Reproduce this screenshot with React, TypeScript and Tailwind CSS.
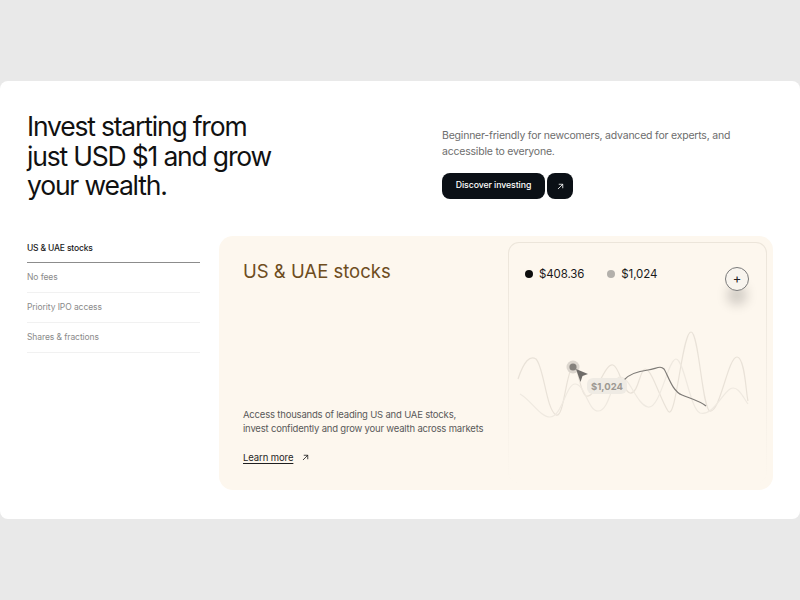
import React from 'react';

const tabs = ['US & UAE stocks', 'No fees', 'Priority IPO access', 'Shares & fractions'];

const ArrowUpRight = ({ className }: { className?: string }) => (
  <svg viewBox="0 0 12 12" className={className} fill="none" stroke="currentColor" strokeWidth="1.1" strokeLinecap="round" strokeLinejoin="round">
    <path d="M3 9 L9 3" />
    <path d="M4.2 3 H9 V7.8" />
  </svg>
);

const Chart = () => (
  <svg viewBox="509 322 257 110" width="257" height="110" className="block">
    {/* faint background waves */}
    <path
      d="M518,380 C524,362 530,356 536,360 C544,368 546,410 556,416 C564,420 566,372 573,367 C578,364 580,395 586,397 C596,400 604,364 613,366 C620,368 622,392 630,394 C638,396 640,370 645,370 C652,370 660,400 668,412 C676,424 682,333 691,333 C699,333 702,410 710,412 C720,414 728,358 737,358 C745,358 746,395 748,402"
      fill="none"
      stroke="#e9e2d8"
      strokeWidth="1.2"
    />
    <path
      d="M520,395 C530,400 540,418 550,418 C562,418 566,385 575,385 C585,385 588,412 598,412 C610,412 612,378 620,378 C630,378 636,405 648,408 C660,411 668,360 676,360 C684,360 690,410 700,414 C712,418 722,395 730,390 C738,385 744,400 748,405"
      fill="none"
      stroke="#efe9e0"
      strokeWidth="1.2"
    />
    {/* active segment */}
    <path
      d="M624,381 C630,374 640,372 648,371 C656,370 660,366 664,370 C668,376 672,392 682,396 C692,400 700,402 706,407"
      fill="none"
      stroke="#7d7a76"
      strokeWidth="1.2"
    />
    {/* point + cursor */}
    <circle cx="573" cy="368" r="6.5" fill="#dcd6ce" />
    <circle cx="573" cy="368" r="3.6" fill="#85817c" />
    <polygon points="576,370 588,375 582.5,377 580.5,383" fill="#6f6c69" />
    {/* tooltip */}
    <rect x="587" y="379" width="40" height="16" rx="6" fill="#efebe4" />
    <text x="607" y="391" textAnchor="middle" fontSize="9.5" fontWeight="700" fill="#9c9892" fontFamily="Inter, sans-serif">
      $1,024
    </text>
  </svg>
);

export default function App() {
  return (
    <div className="h-[600px] bg-[#e9e9e9] pt-[81px] font-['Inter',sans-serif]">
      <div className="h-[438px] rounded-lg bg-white px-[27px] pt-[31px]">
        {/* Top */}
        <div className="flex">
          <h1 className="w-[415px] text-[26.5px] leading-[29.5px] tracking-[-0.045em] text-[#111]">
            Invest starting from
            <br />
            just USD $1 and grow
            <br />
            your wealth.
          </h1>
          <div className="pt-[16px]">
            <p className="text-[10.5px] leading-4 tracking-[-0.02em] text-[#6d6d6d]">
              Beginner-friendly for newcomers, advanced for experts, and
              <br />
              accessible to everyone.
            </p>
            <div className="mt-[13px] flex gap-[2px]">
              <button className="flex h-[26px] w-[103px] items-center justify-center rounded-lg bg-[#0b1016] text-[8.75px] font-medium tracking-[-0.01em] text-white">
                Discover investing
              </button>
              <button className="flex h-[26px] w-[26px] items-center justify-center rounded-lg bg-[#0b1016] text-white">
                <ArrowUpRight className="h-[9px] w-[9px]" />
              </button>
            </div>
          </div>
        </div>

        {/* Bottom */}
        <div className="mt-[35px] flex gap-[19px]">
          <div className="w-[173px]">
            {tabs.map((t, i) =>
              i === 0 ? (
                <div key={t} className="border-b-[1.5px] border-[#8c8c8c] pt-[6px] pb-[7px] text-[8.5px] leading-[13px] font-medium tracking-[-0.02em] text-[#1a1a1a]">
                  {t}
                </div>
              ) : (
                <div key={t} className="border-b border-[#f1f1f1] pt-[8px] pb-[8px] text-[8.5px] leading-[13px] tracking-[-0.01em] text-[#8a8a8a]">
                  {t}
                </div>
              )
            )}
          </div>

          <div className="flex h-[254px] w-[554px] rounded-[14px] bg-[#fdf7ee]">
            <div className="flex flex-1 flex-col justify-between pt-[23px] pb-[25px] pl-6">
              <h2 className="text-[18.5px] leading-6 text-[#6e4d1e]">US &amp; UAE stocks</h2>
              <div>
                <p className="text-[9.5px] leading-[14px] tracking-[-0.02em] whitespace-nowrap text-[#595959]">
                  Access thousands of leading US and UAE stocks,
                  <br />
                  invest confidently and grow your wealth across markets
                </p>
                <div className="mt-[15px] flex items-center gap-[8px] text-[9.5px] leading-[14px] tracking-[-0.01em] text-[#1f1f1f]">
                  <span className="underline underline-offset-2">Learn more</span>
                  <ArrowUpRight className="h-[9px] w-[9px]" />
                </div>
              </div>
            </div>

            <div className="m-[6px] w-[259px] rounded-[11px] bg-gradient-to-b from-[#ece5da] via-[#f3ede4] to-[#fdf7ee] p-px">
              <div className="h-full rounded-[10px] bg-[#fdf7ee]">
                <div className="flex items-start justify-between pt-[23px] pr-[17px] pl-[16px]">
                  <div className="flex items-center text-[11.5px] leading-4 tracking-[-0.01em] text-[#1a1a1a]">
                    <span className="h-2 w-2 rounded-full bg-[#0d0d0d]" />
                    <span className="ml-[6px]">$408.36</span>
                    <span className="ml-[23px] h-2 w-2 rounded-full bg-[#b3b0ab]" />
                    <span className="ml-[6px]">$1,024</span>
                  </div>
                  <button className="mt-px flex h-6 w-6 items-center justify-center rounded-full border border-[#7a7a7a] bg-[#f8f4ee] text-[13px] leading-none text-[#222] shadow-[0_16px_12px_-2px_rgba(0,0,0,0.18)]">
                    +
                  </button>
                </div>
                <div className="mt-[30px]">
                  <Chart />
                </div>
              </div>
            </div>
          </div>
        </div>
      </div>
    </div>
  );
}
